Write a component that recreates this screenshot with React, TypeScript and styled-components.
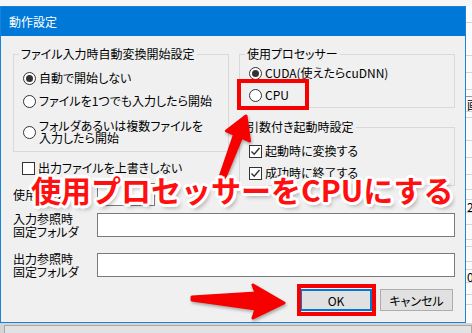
import React from 'react';
import styled, { createGlobalStyle } from 'styled-components';

const GlobalStyle = createGlobalStyle`
  html, body {
    margin: 0;
    padding: 0;
  }
  body {
    font-family: "Noto Sans CJK JP", "Noto Sans", sans-serif;
    color: #000;
  }
`;

const Screen = styled.div`
  position: relative;
  width: 472px;
  height: 333px;
  overflow: hidden;
  box-sizing: border-box;
  padding-top: 6px;
  background: #f6f6f6;
  display: flex;
  flex-direction: column;
`;

const Main = styled.div`
  display: flex;
  height: 317px;
`;

const Dialog = styled.div`
  width: 466px;
  box-sizing: border-box;
  border: 1px solid #1883d7;
  background: #f0f0f0;
  display: flex;
  flex-direction: column;
`;

const TitleBar = styled.div`
  height: 29px;
  flex: none;
  background: #0078d7;
  color: #fff;
  font-size: 12px;
  display: flex;
  align-items: center;
  padding-left: 8px;
`;

const Body = styled.div`
  flex: 1;
  padding: 10px 10px 0 12px;
  font-size: 12px;
  font-feature-settings: "palt";
  display: flex;
  flex-direction: column;
`;

const TopRow = styled.div`
  display: grid;
  grid-template-columns: 216px 216px;
  column-gap: 10px;
  align-items: start;
`;

const Column = styled.div`
  display: flex;
  flex-direction: column;
`;

const Group = styled.fieldset<{ $mt?: number; $pb: number }>`
  margin: ${p => p.$mt ?? 0}px 0 0 0;
  padding: 0 0 ${p => p.$pb}px 9px;
  border: 1px solid #d9d9d9;
  min-width: 0;
`;

const Legend = styled.legend`
  margin-left: -4px;
  padding: 0 2px;
  font-size: 12px;
  line-height: 16px;
`;

const OptionRow = styled.label<{ $mt: number; $lh?: number }>`
  display: flex;
  align-items: center;
  gap: 3px;
  margin-top: ${p => p.$mt}px;
  min-height: 18px;
  line-height: ${p => p.$lh ?? 18}px;
  white-space: nowrap;
`;

const Radio = styled.span<{ $on?: boolean }>`
  width: 13px;
  height: 13px;
  flex: none;
  box-sizing: border-box;
  border: 1px solid #333;
  border-radius: 50%;
  background: #fff;
  display: inline-flex;
  align-items: center;
  justify-content: center;

  &::after {
    content: '';
    width: 7px;
    height: 7px;
    border-radius: 50%;
    background: #333;
    display: ${p => (p.$on ? 'block' : 'none')};
  }
`;

const Box = styled.span`
  width: 13px;
  height: 13px;
  flex: none;
  box-sizing: border-box;
  border: 1px solid #333;
  background: #fff;
  display: inline-flex;
  align-items: center;
  justify-content: center;
`;

const CheckRow = styled(OptionRow)<{ $ml?: number }>`
  margin-left: ${p => p.$ml ?? 0}px;
`;

const FieldRow = styled.div<{ $mt: number }>`
  display: flex;
  align-items: center;
  margin-top: ${p => p.$mt}px;
  min-height: 26px;
`;

const FieldLabel = styled.div`
  width: 84px;
  flex: none;
  line-height: 13px;
`;

const TextBox = styled.div<{ $w?: number; $h: number }>`
  ${p => (p.$w ? `width: ${p.$w}px;` : 'flex: 1;')}
  height: ${p => p.$h}px;
  box-sizing: border-box;
  border: 1px solid #7a7a7a;
  background: #fff;
`;

const ButtonRow = styled.div`
  display: flex;
  justify-content: flex-end;
  gap: 8px;
  margin: 11px 2px 0 0;
`;

const Button = styled.div<{ $primary?: boolean; $w: number }>`
  width: ${p => p.$w}px;
  height: 22px;
  box-sizing: border-box;
  border: ${p => (p.$primary ? '2px solid #0078d7' : '1px solid #adadad')};
  background: #e1e1e1;
  display: flex;
  align-items: center;
  justify-content: center;
  font-size: 12px;
`;

const Behind = styled.div`
  flex: 1;
  background: #fbfbfb;
  display: flex;
  flex-direction: column;
  overflow: hidden;
`;

const Cell = styled.div<{ $h: number; $dark?: boolean }>`
  height: ${p => p.$h}px;
  flex: none;
  box-sizing: border-box;
  border-bottom: 1px solid ${p => (p.$dark ? '#9a9a9a' : '#d4d4d4')};
  font-size: 12px;
  line-height: ${p => p.$h}px;
  white-space: nowrap;
  padding-left: 1px;
`;

const BottomBar = styled.div`
  flex: 1;
  background: #d4d4d4;
  padding: 2px 0 0 4px;
  display: flex;
`;

const Tab = styled.div`
  flex: 1;
  border: 1px solid #a9a9a9;
  border-bottom: none;
  background: #e2e2e2;
`;

const Highlight = styled.div<{ $x: number; $y: number; $w: number; $h: number }>`
  position: absolute;
  left: ${p => p.$x}px;
  top: ${p => p.$y}px;
  width: ${p => p.$w}px;
  height: ${p => p.$h}px;
  box-sizing: border-box;
  border: 4px solid #f60000;
`;

const Arrows = styled.svg`
  position: absolute;
  left: 0;
  top: 0;
  filter: drop-shadow(1px 2px 1.5px rgba(0, 0, 0, 0.3));
`;

const Caption = styled.div`
  position: absolute;
  left: 31px;
  top: 173px;
  font-family: "Noto Sans CJK JP", sans-serif;
  font-size: 30px;
  line-height: 32px;
  font-weight: 700;
  color: #ff0f0f;
  white-space: nowrap;
  text-shadow:
    2px 0 #fff, -2px 0 #fff, 0 2px #fff, 0 -2px #fff,
    2px 2px #fff, -2px -2px #fff, 2px -2px #fff, -2px 2px #fff,
    3px 0 #fff, -3px 0 #fff, 0 3px #fff, 0 -3px #fff,
    3px 1px #fff, -3px -1px #fff, 1px 3px #fff, -1px -3px #fff,
    3px 4px 4px rgba(0, 0, 0, 0.3);
`;

const Tick = () => (
  <svg width="11" height="11" viewBox="0 0 11 11">
    <polyline points="1.5,5.5 4.2,8.3 9.5,2" fill="none" stroke="#333" strokeWidth="1.4" />
  </svg>
);

const behindCells: { h: number; dark?: boolean; t?: string }[] = [
  { h: 17 }, { h: 33 }, { h: 17 }, { h: 17 }, { h: 7, dark: true },
  { h: 15, t: '画' }, { h: 6 }, { h: 23 }, { h: 17 }, { h: 17 },
  { h: 15 }, { h: 10 }, { h: 13, t: '2' }, { h: 12 }, { h: 15 },
  { h: 7 }, { h: 15 }, { h: 8 }, { h: 13, t: '0' }, { h: 12 }, { h: 10 },
];

export default function App() {
  return (
    <Screen>
      <GlobalStyle />
      <Main>
        <Dialog>
          <TitleBar>動作設定</TitleBar>
          <Body>
            <TopRow>
              <Column>
                <Group $pb={7}>
                  <Legend>ファイル入力時自動変換開始設定</Legend>
                  <OptionRow $mt={7}>
                    <Radio $on />
                    自動で開始しない
                  </OptionRow>
                  <OptionRow $mt={5}>
                    <Radio />
                    ファイルを1つでも入力したら開始
                  </OptionRow>
                  <OptionRow $mt={10} $lh={12}>
                    <Radio />
                    <span>
                      フォルダあるいは複数ファイルを
                      <br />
                      入力したら開始
                    </span>
                  </OptionRow>
                </Group>
                <CheckRow $mt={7} $ml={9}>
                  <Box />
                  出力ファイルを上書きしない
                </CheckRow>
                <FieldRow $mt={4}>
                  <FieldLabel>使用GPU</FieldLabel>
                  <TextBox $w={58} $h={23} />
                </FieldRow>
              </Column>
              <Column>
                <Group $pb={3}>
                  <Legend>使用プロセッサー</Legend>
                  <OptionRow $mt={2}>
                    <Radio $on />
                    CUDA(使えたらcuDNN)
                  </OptionRow>
                  <OptionRow $mt={4}>
                    <Radio />
                    CPU
                  </OptionRow>
                </Group>
                <Group $mt={11} $pb={3}>
                  <Legend>引数付き起動時設定</Legend>
                  <CheckRow $mt={7}>
                    <Box>
                      <Tick />
                    </Box>
                    起動時に変換する
                  </CheckRow>
                  <CheckRow $mt={4}>
                    <Box>
                      <Tick />
                    </Box>
                    成功時に終了する
                  </CheckRow>
                </Group>
              </Column>
            </TopRow>
            <FieldRow $mt={5}>
              <FieldLabel>
                入力参照時
                <br />
                固定フォルダ
              </FieldLabel>
              <TextBox $h={24} />
            </FieldRow>
            <FieldRow $mt={14}>
              <FieldLabel>
                出力参照時
                <br />
                固定フォルダ
              </FieldLabel>
              <TextBox $h={24} />
            </FieldRow>
            <ButtonRow>
              <Button $primary $w={72}>OK</Button>
              <Button $w={73}>キャンセル</Button>
            </ButtonRow>
          </Body>
        </Dialog>
        <Behind>
          {behindCells.map((c, i) => (
            <Cell key={i} $h={c.h} $dark={c.dark}>
              {c.t}
            </Cell>
          ))}
        </Behind>
      </Main>
      <BottomBar>
        <Tab />
      </BottomBar>

      <Highlight $x={237} $y={79} $w={72} $h={31} />
      <Highlight $x={297} $y={284} $w={79} $h={32} />
      <Arrows width="472" height="333" viewBox="0 0 472 333">
        <polygon
          points="246,116 249.5,141 241.5,137.5 223,182 219,180 234.5,134.5 226.5,131"
          fill="#f60000"
          stroke="#f60000"
          strokeWidth="3"
          strokeLinejoin="round"
        />
        <polygon
          points="284,303 253,318 256,309 192,300 192,297 256,293 253,285"
          fill="#f60000"
          stroke="#f60000"
          strokeWidth="3"
          strokeLinejoin="round"
        />
      </Arrows>
      <Caption>使用プロセッサーをCPUにする</Caption>
    </Screen>
  );
}
